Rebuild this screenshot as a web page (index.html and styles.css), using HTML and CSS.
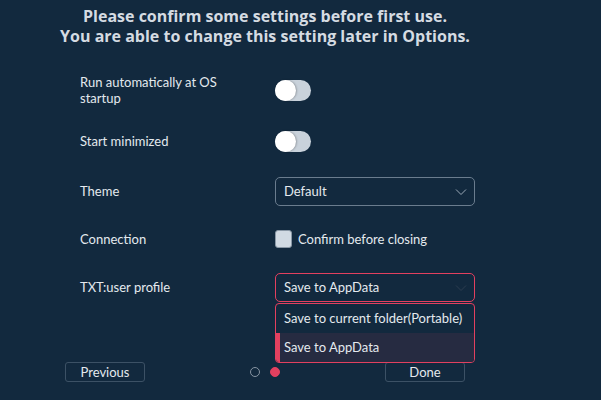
FILE: index.html
```html
<!DOCTYPE html>
<html>
<head>
<meta charset="utf-8">
<link rel="stylesheet" href="styles.css">
</head>
<body>
<div class="page">
  <h1 class="title"><span class="tline">Please confirm some settings before first use.</span><span class="tline">You are able to change this setting later in Options.</span></h1>
  <div class="form">
    <div class="row row-tall">
      <div class="label">Run automatically at OS startup</div>
      <div class="control"><span class="toggle"><span class="knob"></span></span></div>
    </div>
    <div class="row row-a">
      <div class="label">Start minimized</div>
      <div class="control"><span class="toggle"><span class="knob"></span></span></div>
    </div>
    <div class="row row-a">
      <div class="label">Theme</div>
      <div class="control">
        <div class="select">
          <span>Default</span>
          <svg class="chev" width="12" height="8" viewBox="0 0 12 8"><path d="M1 1.5 L6 6.5 L11 1.5" fill="none" stroke="#9aa8b6" stroke-width="1"/></svg>
        </div>
      </div>
    </div>
    <div class="row row-b">
      <div class="label">Connection</div>
      <div class="control check-wrap"><span class="checkbox"></span><span>Confirm before closing</span></div>
    </div>
    <div class="row row-a">
      <div class="label">TXT:user profile</div>
      <div class="control">
        <div class="select open">
          <span>Save to AppData</span>
          <svg class="chev" width="12" height="8" viewBox="0 0 12 8"><path d="M1 1.5 L6 6.5 L11 1.5" fill="none" stroke="#2c3d50" stroke-width="1"/></svg>
          <div class="menu">
            <div class="item">Save to current folder(Portable)</div>
            <div class="item selected">Save to AppData</div>
          </div>
        </div>
      </div>
    </div>
  </div>
  <div class="footer">
    <button class="btn">Previous</button>
    <div class="dots"><span class="dot"></span><span class="dot active"></span></div>
    <button class="btn">Done</button>
  </div>
</div>
</body>
</html>
```
FILE: styles.css
```css
html, body {
  margin: 0;
  padding: 0;
  background: #12293e;
}
body {
  width: 601px;
  height: 400px;
  overflow: hidden;
  font-family: Lato, "Liberation Sans", sans-serif;
  color: #e4e9ee;
}
.page {
  width: 530px;
}
.title {
  margin: 0;
  padding-top: 6px;
  text-align: center;
  font-family: "Open Sans", "Liberation Sans", sans-serif;
  font-size: 16px;
  line-height: 20px;
  font-weight: bold;
  color: #d5dbe2;
}
.tline {
  display: block;
  height: 20px;
}
.form {
  padding-left: 80px;
  margin-top: 26px;
  font-size: 13px;
}
.row {
  display: grid;
  grid-template-columns: 195px 200px;
  align-items: center;
}
.row-tall {
  height: 36px;
  margin-bottom: 8px;
}
.row-a {
  height: 50px;
}
.row-b {
  height: 46px;
}
.label {
  width: 160px;
  line-height: 16px;
}
.toggle {
  display: block;
  width: 36px;
  height: 21px;
  border-radius: 11px;
  background: #c9d2db;
  position: relative;
}
.knob {
  position: absolute;
  left: 0;
  top: 0;
  width: 21px;
  height: 21px;
  border-radius: 50%;
  background: #ffffff;
  box-shadow: 1px 0 2px rgba(0,0,0,0.25);
}
.select {
  position: relative;
  box-sizing: border-box;
  height: 29px;
  border: 1px solid #6a7c8e;
  border-radius: 5px;
  display: flex;
  align-items: center;
  padding-left: 8px;
}
.select .chev {
  position: absolute;
  right: 7px;
  top: 10px;
}
.select.open {
  border-color: #e2405f;
}
.menu {
  position: absolute;
  left: -1px;
  top: 29px;
  width: 200px;
  box-sizing: border-box;
  border: 1px solid #e2405f;
  border-radius: 4px;
  overflow: hidden;
  background: #12293e;
  z-index: 2;
}
.item {
  height: 29px;
  line-height: 29px;
  padding-left: 8px;
}
.item.selected {
  background: #262b41;
  border-left: 4px solid #e2405f;
  padding-left: 4px;
}
.check-wrap {
  display: flex;
  align-items: center;
  gap: 6px;
}
.checkbox {
  box-sizing: border-box;
  width: 17px;
  height: 18px;
  border-radius: 3px;
  background: #d1dae3;
  border: 1px solid #8a98a6;
}
.footer {
  display: flex;
  align-items: center;
  padding-left: 65px;
  margin-top: 50px;
}
.btn {
  width: 80px;
  height: 20px;
  box-sizing: border-box;
  border: 1px solid #3c5165;
  border-radius: 3px;
  background: transparent;
  color: #e4e9ee;
  font-family: Lato, "Liberation Sans", sans-serif;
  font-size: 13px;
  padding: 0;
  line-height: 18px;
}
.dots {
  display: flex;
  gap: 10px;
  margin-left: 105px;
  margin-right: 105px;
}
.dot {
  width: 10px;
  height: 10px;
  box-sizing: border-box;
  border-radius: 50%;
  border: 1px solid #8795a3;
}
.dot.active {
  background: #e2405f;
  border-color: #e2405f;
}
```
